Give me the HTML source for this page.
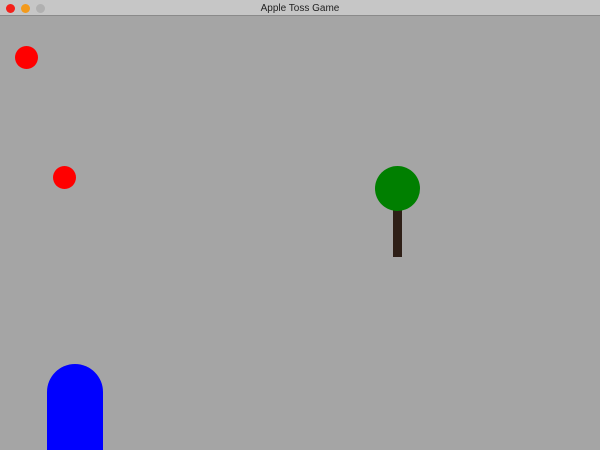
<!DOCTYPE html>
<html><head><style>
html,body{margin:0;width:600px;height:450px;overflow:hidden}
body{background:#a5a5a5;position:relative;font-family:"Liberation Sans",sans-serif}
.bar{position:absolute;left:0;top:0;width:600px;height:15px;background:#c6c6c6;border-bottom:1px solid #8a8a8a;font-size:10px;text-align:center;line-height:17px;color:#222}
.d{position:absolute;top:4px;width:9px;height:9px;border-radius:50%}
.c{position:absolute;border-radius:50%}
</style></head><body>
<div class="bar">Apple Toss Game</div>
<div class="d" style="left:6px;background:#f4201a"></div>
<div class="d" style="left:21px;background:#f39a1c"></div>
<div class="d" style="left:36px;background:#b0b0b0"></div>
<div class="c" style="left:15px;top:46px;width:23px;height:23px;background:#ff0000"></div>
<div class="c" style="left:53px;top:166px;width:23px;height:23px;background:#ff0000"></div>
<div style="position:absolute;left:393px;top:205px;width:9px;height:52px;background:#2e1f17"></div>
<div class="c" style="left:375px;top:166px;width:45px;height:45px;background:#007f00"></div>
<div style="position:absolute;left:47px;top:364px;width:56px;height:86px;background:#0000ff;border-radius:28px 28px 0 0"></div>
</body></html>
